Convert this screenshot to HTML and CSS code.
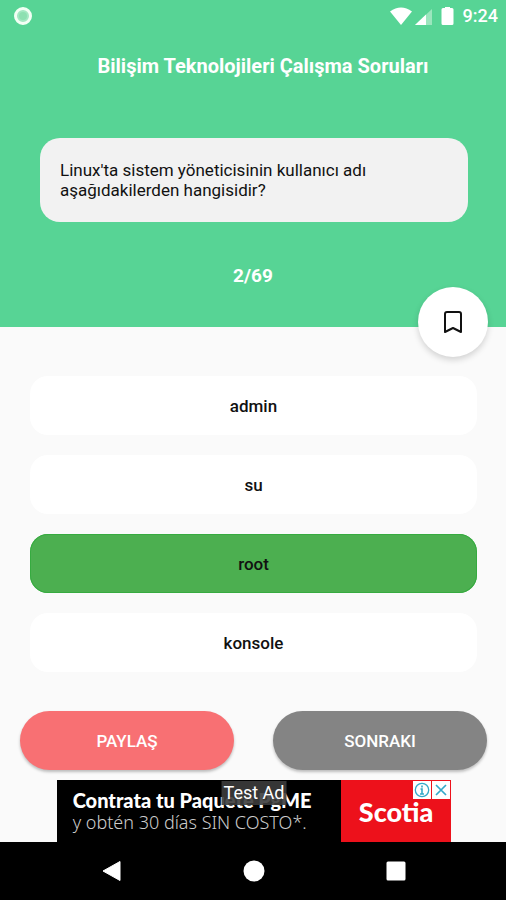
FILE: index.html
```html
<!DOCTYPE html>
<html lang="tr">
<head>
<meta charset="utf-8">
<meta name="viewport" content="width=device-width, initial-scale=1">
<title>Bilişim Teknolojileri Çalışma Soruları</title>
<link rel="stylesheet" href="styles.css">
</head>
<body>
<div class="screen">
  <header class="hero">
    <div class="status">
      <svg class="status-dot" width="20" height="20" viewBox="0 0 20 20" aria-hidden="true"><circle cx="10" cy="10" r="7.5" fill="#a3e8c2" stroke="#f2fff4" stroke-width="3"/><circle cx="10" cy="10" r="4" fill="#8de0b1"/></svg>
      <svg width="72" height="20" viewBox="0 0 72 20" aria-hidden="true">
        <path d="M0 5.500Q11-2.500 22 5.500L11 19Z" fill="#fff"/>
        <path d="M42 3V19H25Z" fill="#9be6bd"/>
        <path d="M36 8.600V19H25Z" fill="#fff"/>
        <path d="M55 2V1h5v1h2q1.500 0 1.500 1.500v14q0 1.500-1.500 1.500h-9q-1.500 0-1.500-1.500v-14Q51.500 2 53 2Z" fill="#fff"/>
      </svg>
      <span class="clock">9:24</span>
    </div>
    <h1 class="title">Bilişim Teknolojileri Çalışma Soruları</h1>
    <p class="question">Linux'ta sistem yöneticisinin kullanıcı adı aşağıdakilerden hangisidir?</p>
    <p class="progress">2/69</p>
    <button class="bookmark" type="button" aria-label="Kaydet">
      <svg width="28" height="28" viewBox="0 0 28 28" fill="none" stroke="#111" stroke-width="2" stroke-linejoin="round" aria-hidden="true"><path d="M6 24V6q0-2 2-2h12q2 0 2 2v18l-8-4z"/></svg>
    </button>
  </header>
  <main class="content">
    <div class="answers">
      <button class="answer" type="button">admin</button>
      <button class="answer" type="button">su</button>
      <button class="answer correct" type="button">root</button>
      <button class="answer" type="button">konsole</button>
    </div>
    <div class="actions">
      <button class="action share" type="button">PAYLAŞ</button>
      <button class="action next" type="button">SONRAKI</button>
    </div>
  </main>
  <aside class="ad">
    <div class="ad-copy">
      <strong class="ad-head">Contrata tu Paquete PgME</strong>
      <span class="ad-sub">y obtén 30 días SIN COSTO*.</span>
    </div>
    <div class="ad-brand">Scotia</div>
    <span class="ad-label">Test Ad</span>
    <div class="ad-tools">
      <button type="button" class="ad-tool" aria-label="Info"><svg width="18" height="18" viewBox="0 0 18 18" fill="none" stroke="#35a9c9" aria-hidden="true"><circle cx="9" cy="9" r="6.700" stroke-width="1.300"/><path d="M9 4.500v2M7.500 8H9v5M7 13h4" stroke-width="1.600"/></svg></button>
      <button type="button" class="ad-tool" aria-label="Kapat"><svg width="18" height="18" viewBox="0 0 18 18" fill="none" stroke="#35a9c9" stroke-width="1.700" aria-hidden="true"><path d="M4 4l10 10M14 4L4 14"/></svg></button>
    </div>
  </aside>
  <nav class="navbar">
    <button type="button" class="nav-btn" aria-label="Geri"><svg width="22" height="22" viewBox="0 0 22 22"><path d="M2 11 19 1.500v19z" fill="#fff" stroke="#fff" stroke-linejoin="round"/></svg></button>
    <button type="button" class="nav-btn" aria-label="Ana ekran"><svg width="22" height="22" viewBox="0 0 22 22"><circle cx="11" cy="11" r="10.500" fill="#fff"/></svg></button>
    <button type="button" class="nav-btn" aria-label="Son uygulamalar"><svg width="22" height="22" viewBox="0 0 22 22"><rect x="1.500" y="1.500" width="19" height="19" rx="1.500" fill="#fff"/></svg></button>
  </nav>
</div>
</body>
</html>
```
FILE: styles.css
```css
* {
  box-sizing: border-box;
}

body {
  margin: 0;
  background: #fafafa;
  font-family: Roboto, "Liberation Sans", sans-serif;
  color: #111;
}

button {
  padding: 0;
  border: 0;
  font: inherit;
  color: inherit;
  cursor: pointer;
}

svg {
  display: block;
}

.screen {
  display: flex;
  flex-direction: column;
  min-height: 100vh;
}

.hero {
  position: relative;
  padding-bottom: 39px;
  background: #57d495;
}

.status {
  display: flex;
  align-items: center;
  height: 32px;
  padding: 0 8px 0 13px;
  color: #fff;
}

.status-dot {
  margin-right: auto;
}

.clock {
  width: 36px;
  font-size: 18px;
  font-weight: 500;
  line-height: 32px;
  text-align: right;
}

.status svg + svg {
  flex: none;
}

.title {
  margin: 21px 0 0 20px;
  font-size: 20px;
  font-weight: 700;
  line-height: 26px;
  text-align: center;
  color: #fff;
}

.question {
  margin: 59px 38px 0 40px;
  padding: 22px 20px;
  border-radius: 20px;
  background: #f2f2f2;
  font-size: 17px;
  line-height: 20px;
}

.progress {
  margin: 42px 0 0;
  font-size: 19px;
  font-weight: 700;
  line-height: 24px;
  text-align: center;
  color: #fff;
}

.bookmark {
  position: absolute;
  right: 18px;
  bottom: -30px;
  display: grid;
  place-items: center;
  width: 70px;
  height: 70px;
  border-radius: 50%;
  background: #fff;
  box-shadow: 0 3px 6px rgba(0, 0, 0, 0.16);
}

.content {
  padding: 49px 19px 10px 20px;
}

.answers {
  display: grid;
  gap: 20px;
  padding: 0 10px;
}

.answer {
  height: 59px;
  border-radius: 18px;
  background: #fff;
  font-size: 17px;
  font-weight: 500;
}

.correct {
  background: #4caf50;
  box-shadow: inset 0 0 0 1px #36ab40;
}

.actions {
  display: grid;
  grid-template-columns: 1fr 1fr;
  gap: 39px;
  margin-top: 39px;
}

.action {
  height: 59px;
  border-radius: 30px;
  font-size: 17px;
  font-weight: 500;
  color: #fff;
  box-shadow: 0 2px 3px rgba(0, 0, 0, 0.25);
}

.share {
  background: #f87073;
}

.next {
  background: #848484;
}

.ad {
  position: relative;
  display: flex;
  align-self: center;
  width: 78%;
  margin-left: 2px;
  height: 62px;
  background: #000;
  color: #fff;
}

.ad-copy {
  flex: 1;
  padding: 9px 0 0 16px;
  white-space: nowrap;
}

.ad-head,
.ad-sub {
  display: block;
  line-height: 22px;
}

.ad-head {
  font-family: Lato, sans-serif;
  font-size: 20px;
  font-weight: 900;
}

.ad-sub {
  font-family: "Noto Sans", sans-serif;
  font-size: 18px;
  font-weight: 300;
  color: #ccc;
}

.ad-brand {
  width: 28%;
  padding-top: 4px;
  background: #ed111b;
  font-family: Lato, sans-serif;
  font-size: 27px;
  font-weight: 900;
  line-height: 56px;
  text-align: center;
}

.ad-label {
  position: absolute;
  top: 1px;
  left: 50%;
  padding: 0 2px;
  background: rgba(60, 60, 60, 0.9);
  font-size: 18px;
  line-height: 24px;
  white-space: nowrap;
  transform: translateX(-50%);
}

.ad-tools {
  position: absolute;
  top: 1px;
  right: 1px;
  display: flex;
  gap: 1px;
}

.ad-tool {
  display: grid;
  place-items: center;
  width: 18px;
  height: 18px;
  background: #fff;
}

.navbar {
  display: flex;
  flex: 1;
  justify-content: center;
  gap: 120px;
  min-height: 58px;
  padding-left: 1px;
  background: #000;
}

.nav-btn {
  display: grid;
  place-items: center;
  width: 22px;
  background: none;
}
```
